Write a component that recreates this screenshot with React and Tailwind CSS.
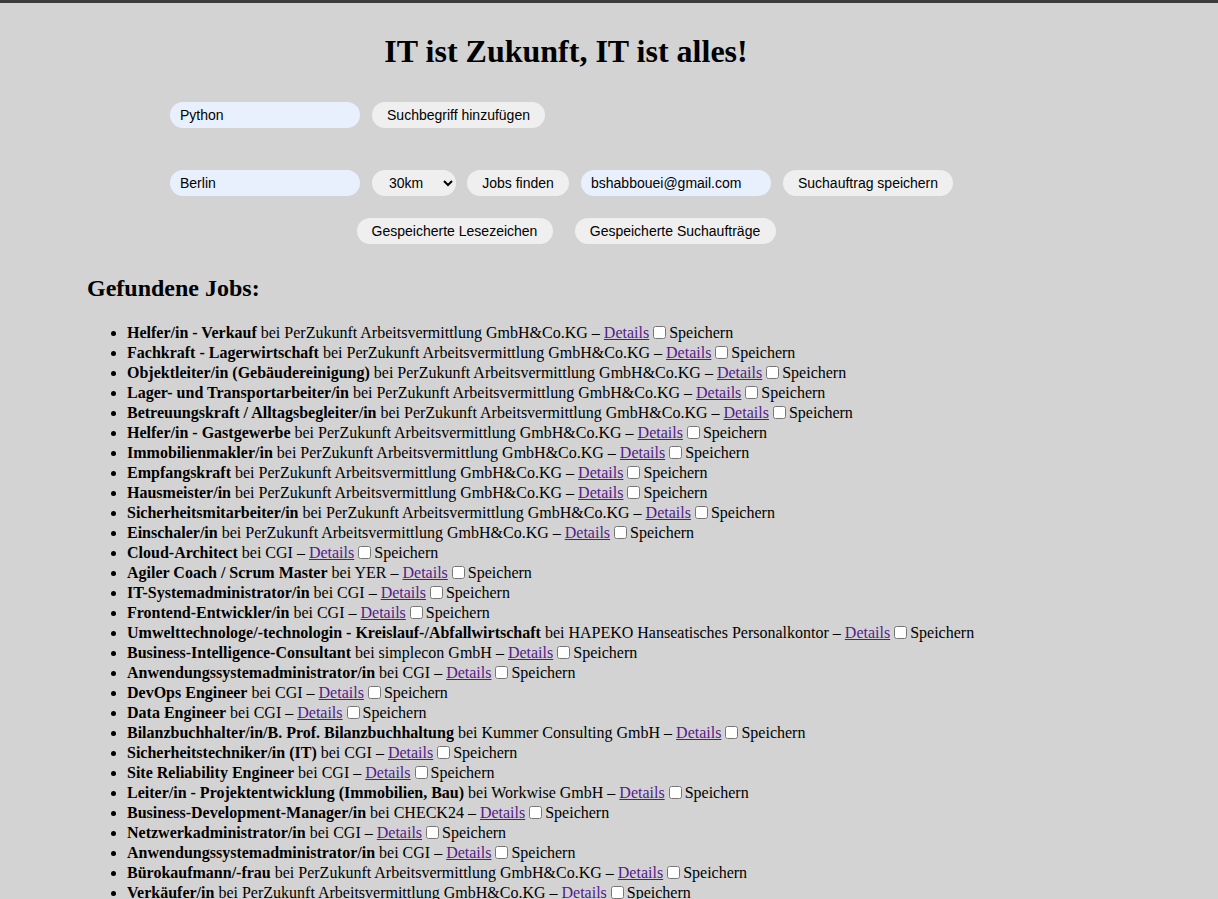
import React, { useState } from 'react';

const PZ = 'PerZukunft Arbeitsvermittlung GmbH&Co.KG';

const jobs = [
  ['Helfer/in - Verkauf', PZ],
  ['Fachkraft - Lagerwirtschaft', PZ],
  ['Objektleiter/in (Gebäudereinigung)', PZ],
  ['Lager- und Transportarbeiter/in', PZ],
  ['Betreuungskraft / Alltagsbegleiter/in', PZ],
  ['Helfer/in - Gastgewerbe', PZ],
  ['Immobilienmakler/in', PZ],
  ['Empfangskraft', PZ],
  ['Hausmeister/in', PZ],
  ['Sicherheitsmitarbeiter/in', PZ],
  ['Einschaler/in', PZ],
  ['Cloud-Architect', 'CGI'],
  ['Agiler Coach / Scrum Master', 'YER'],
  ['IT-Systemadministrator/in', 'CGI'],
  ['Frontend-Entwickler/in', 'CGI'],
  ['Umwelttechnologe/-technologin - Kreislauf-/Abfallwirtschaft', 'HAPEKO Hanseatisches Personalkontor'],
  ['Business-Intelligence-Consultant', 'simplecon GmbH'],
  ['Anwendungssystemadministrator/in', 'CGI'],
  ['DevOps Engineer', 'CGI'],
  ['Data Engineer', 'CGI'],
  ['Bilanzbuchhalter/in/B. Prof. Bilanzbuchhaltung', 'Kummer Consulting GmbH'],
  ['Sicherheitstechniker/in (IT)', 'CGI'],
  ['Site Reliability Engineer', 'CGI'],
  ['Leiter/in - Projektentwicklung (Immobilien, Bau)', 'Workwise GmbH'],
  ['Business-Development-Manager/in', 'CHECK24'],
  ['Netzwerkadministrator/in', 'CGI'],
  ['Anwendungssystemadministrator/in', 'CGI'],
  ['Bürokaufmann/-frau', PZ],
  ['Verkäufer/in', PZ],
];

const field = 'h-[26px] w-[190px] rounded-full bg-[#e8f0fe] px-[10px] text-[14px] text-black outline-none';
const btn = 'h-[26px] rounded-full bg-[#efefef] text-[14px] text-black';

export default function App() {
  const [term, setTerm] = useState('Python');
  const [city, setCity] = useState('Berlin');
  const [email, setEmail] = useState('bshabbouei@gmail.com');
  const [radius, setRadius] = useState('30');

  return (
    <div className="min-h-screen bg-[#d3d3d3] font-['Liberation_Serif',serif] text-black">
      <div className="h-[3px] bg-[#3c3c3c]" />
      <div className="pl-[87px]">
        <div className="w-[958px]">
          <h1 className="mt-[30px] text-center text-[32px] font-bold leading-[37px]">IT ist Zukunft, IT ist alles!</h1>

          <div className="font-['Liberation_Sans',Arial,sans-serif]">
            <div className="mt-[32px] flex gap-[12px] pl-[83px]">
              <input className={field} value={term} onChange={(e) => setTerm(e.target.value)} />
              <button className={`${btn} w-[173px]`}>Suchbegriff hinzufügen</button>
            </div>

            <div className="mt-[42px] flex pl-[83px]">
              <input className={field} value={city} onChange={(e) => setCity(e.target.value)} />
              <select
                value={radius}
                onChange={(e) => setRadius(e.target.value)}
                className="ml-[12px] h-[26px] w-[84px] rounded-full bg-[#efefef] pl-[13px] text-[14px] text-black"
              >
                <option value="10">10km</option>
                <option value="20">20km</option>
                <option value="30">30km</option>
                <option value="50">50km</option>
              </select>
              <button className={`${btn} ml-[11px] w-[102px]`}>Jobs finden</button>
              <input className={`${field} ml-[12px]`} value={email} onChange={(e) => setEmail(e.target.value)} />
              <button className={`${btn} ml-[12px] w-[170px]`}>Suchauftrag speichern</button>
            </div>

            <div className="mt-[22px] flex justify-center gap-[22px]">
              <button className={`${btn} w-[196px]`}>Gespeicherte Lesezeichen</button>
              <button className={`${btn} w-[201px]`}>Gespeicherte Suchaufträge</button>
            </div>
          </div>
        </div>

        <h2 className="mt-[31px] text-[24px] font-bold leading-[27px]">Gefundene Jobs:</h2>

        <ul className="mt-[21px] list-disc pl-[40px] text-[16px] leading-[20px]">
          {jobs.map(([title, company], i) => (
            <li key={i}>
              <b>{title}</b> bei {company} –{' '}
              <a href="#" className="text-[#551a8b] underline">Details</a>
              <input type="checkbox" className="my-0 ml-[4px] mr-[3px] h-[13px] w-[13px] align-[-1px]" />
              Speichern
            </li>
          ))}
        </ul>
      </div>
    </div>
  );
}
